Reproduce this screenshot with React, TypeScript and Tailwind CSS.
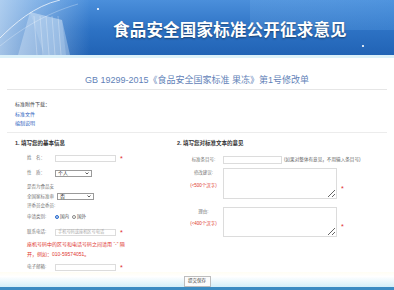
import React from "react"

const Star = () => <span className="ml-[4px] text-[7px] leading-none text-[#e02b2b]">*</span>

function Field({ label, children }: { label: string; children: React.ReactNode }) {
  return (
    <div className="flex h-[10px] items-center">
      <div className="w-[28px] shrink-0 text-[4.5px] text-[#777]">{label}</div>
      {children}
    </div>
  )
}

function FakeSelect({ value }: { value: string }) {
  return (
    <div className="flex h-[7px] w-[37px] items-center justify-between border border-[#9a9a9a] bg-white px-[2px] text-[5px] leading-none text-[#222]">
      <span>{value}</span>
      <svg width="4" height="3" viewBox="0 0 8 6">
        <path d="M1 1l3 3 3-3" fill="none" stroke="#333" strokeWidth="1.6" />
      </svg>
    </div>
  )
}

function Banner() {
  return (
    <div className="relative flex h-[55px] items-center overflow-hidden bg-[linear-gradient(180deg,#4b8fdb_0%,#2d72c4_55%,#2163b5_100%)] pl-[113px] pt-[5px]">
      <svg className="absolute inset-0" width="394" height="55" viewBox="0 0 394 55">
        <defs>
          <linearGradient id="glow" x1="0" y1="0" x2="1" y2="0">
            <stop offset="0" stopColor="#cfe3f7" stopOpacity="0.75" />
            <stop offset="1" stopColor="#cfe3f7" stopOpacity="0" />
          </linearGradient>
          <linearGradient id="ln" x1="0" y1="0" x2="1" y2="0">
            <stop offset="0" stopColor="#fff" stopOpacity="0.9" />
            <stop offset="1" stopColor="#fff" stopOpacity="0" />
          </linearGradient>
          <linearGradient id="ln2" x1="0" y1="0" x2="1" y2="0">
            <stop offset="0" stopColor="#fff" stopOpacity="0" />
            <stop offset="1" stopColor="#fff" stopOpacity="0.9" />
          </linearGradient>
          <linearGradient id="sky" x1="0" y1="0" x2="1" y2="0">
            <stop offset="0" stopColor="#8ec1ee" stopOpacity="0.25" />
            <stop offset="1" stopColor="#5aa0e6" stopOpacity="0.5" />
          </linearGradient>
        </defs>
        <rect x="250" y="0" width="144" height="30" fill="url(#sky)" opacity="0.6" />
        <rect x="0" y="0" width="90" height="55" fill="url(#glow)" />
        <path d="M18 55 L30 12 L62 20 L70 55 Z" fill="#e4f0fb" opacity="0.35" />
        <path d="M30 12 L62 20 L66 55 L44 55 Z" fill="#bcd7f2" opacity="0.35" />
        {[34, 40, 46, 52, 58].map((x) => (
          <line key={x} x1={x} y1="16" x2={x + 3} y2="55" stroke="#ffffff" strokeOpacity="0.35" strokeWidth="0.8" />
        ))}
        <path d="M0 38 C14 24 34 6 60 0" fill="none" stroke="#ffffff" strokeOpacity="0.7" strokeWidth="1" />
        <path d="M0 46 C20 30 44 14 78 4" fill="none" stroke="#ffffff" strokeOpacity="0.35" strokeWidth="0.8" />
        <line x1="98" y1="9" x2="240" y2="9" stroke="url(#ln)" strokeWidth="0.8" />
        <circle cx="98" cy="9" r="1.1" fill="#fff" />
        <line x1="200" y1="46" x2="363" y2="46" stroke="url(#ln2)" strokeWidth="0.8" />
        <circle cx="363" cy="46" r="1.1" fill="#fff" />
      </svg>
      <h1 className="relative text-[16.5px] font-bold leading-none tracking-[0.2px] text-white [text-shadow:0_1px_2px_rgba(0,0,0,0.45)]">
        食品安全国家标准公开征求意见
      </h1>
    </div>
  )
}

export default function App() {
  return (
    <div className="h-[290px] w-[394px] overflow-hidden bg-white font-[family-name:Liberation_Sans,Noto_Sans_CJK_SC,sans-serif] text-[#333]">
      <Banner />
      <div className="h-[3px] bg-[#dcf1f9]" />

      {/* title */}
      <div className="mx-[7px] border-b border-[#e6e6e6] pb-[3px] pt-[16px] text-center text-[9px] leading-[12px] text-[#6282b8]">
        GB 19299-2015《食品安全国家标准 果冻》第1号修改单
      </div>

      {/* attachments */}
      <div className="mx-[7px] border-b border-[#ececec] pb-[4px] pl-[8px] pt-[10px]">
        <div className="text-[5px] leading-[8px] text-[#444]">标准附件下载：</div>
        <div className="mt-[2px] text-[5px] leading-[9px] text-[#2f63c0]">标准文件</div>
        <div className="text-[5px] leading-[9px] text-[#2f63c0]">编制说明</div>
      </div>

      <div className="grid h-[139px] grid-cols-[177px_1fr] pt-[6px]">
        {/* left column */}
        <div className="pl-[15px]">
          <div className="text-[5.5px] font-bold leading-[8px] text-[#333]">1. 填写您的基本信息</div>
          <div className="ml-[12px]">
            <div className="mt-[6px]">
              <Field label="姓　名：">
                <div className="h-[7px] w-[61px] border border-[#dcdcdc]" />
                <Star />
              </Field>
            </div>
            <div className="mt-[5px]">
              <Field label="性　质：">
                <FakeSelect value="个人" />
              </Field>
            </div>
            <div className="mt-[4px] flex items-center">
              <div className="w-[30px] shrink-0 text-[4.5px] leading-[9.5px] text-[#777]">
                是否为食品安
                <br />
                全国家标准审
                <br />
                评委员会委员:
              </div>
              <FakeSelect value="否" />
            </div>
            <div className="mt-[1.5px]">
              <Field label="申请类别:">
                <div className="flex items-center gap-[1px] text-[4.5px] text-[#555]">
                  <span className="inline-block h-[4px] w-[4px] rounded-full border border-[#2f6fd0] bg-[#2f6fd0] shadow-[inset_0_0_0_0.6px_#fff]" />
                  <span className="mr-[2px]">国内</span>
                  <span className="inline-block h-[4px] w-[4px] rounded-full border border-[#888] bg-white" />
                  <span>国外</span>
                </div>
              </Field>
            </div>
            <div className="mt-[5px]">
              <Field label="联系电话:">
                <div className="flex h-[7px] w-[61px] items-center border border-[#dcdcdc] pl-[2px] text-[4.2px] text-[#aaa]">
                  手机号码或座机区号电话
                </div>
                <Star />
              </Field>
            </div>
            <div className="mt-[2px] text-[5px] leading-[10px] text-[#e0352d]">
              座机号码中的区号和电话号码之间请用 “-” 隔
              <br />
              开，例如：010-59574051。
            </div>
            <div className="mt-[3px]">
              <Field label="电子邮箱:">
                <div className="h-[7px] w-[61px] border border-[#dcdcdc]" />
                <Star />
              </Field>
            </div>
          </div>
        </div>

        {/* right column */}
        <div>
          <div className="text-[5.5px] font-bold leading-[8px] text-[#333]">2. 填写您对标准文本的意见</div>
          <div className="ml-[11px]">
            <div className="mt-[8px] flex h-[10px] items-center">
              <div className="w-[31px] shrink-0 text-center text-[4.5px] text-[#777]">标准条目号:</div>
              <div className="ml-[4px] h-[8px] w-[59px] border border-[#dcdcdc]" />
              <span className="ml-[2px] text-[4.6px] text-[#666]">(如果对整体有意见，不用输入条目号)</span>
            </div>
            <div className="mt-[3px] flex items-start">
              <div className="w-[31px] shrink-0 pt-[1px] text-center text-[4.5px] leading-[8px]">
                <div className="text-[#777]">修改建议:</div>
                <div className="mt-[5px] text-[#e0352d]">(&lt;500个汉字)</div>
              </div>
              <textarea className="ml-[4px] h-[31px] w-[114px] resize-y border border-[#dcdcdc] outline-none" />
              <span className="self-end pb-[1px]">
                <Star />
              </span>
            </div>
            <div className="mt-[8px] flex items-start">
              <div className="w-[31px] shrink-0 pt-[1px] text-center text-[4.5px] leading-[8px]">
                <div className="text-[#777]">理由:</div>
                <div className="mt-[4px] text-[#e0352d]">(&lt;400个汉字)</div>
              </div>
              <textarea className="ml-[4px] h-[30px] w-[114px] resize-y border border-[#dcdcdc] outline-none" />
              <span className="self-end pb-[1px]">
                <Star />
              </span>
            </div>
          </div>
        </div>
      </div>

      {/* footer */}
      <div className="flex h-[15px] items-end justify-center bg-[linear-gradient(180deg,#fffdf3_0%,#ffffff_30%,#d3eef8_100%)]">
        <button className="h-[11px] w-[27px] border border-[#bdbdbd] bg-[#fbfbfb] text-[4.5px] leading-none text-[#444]">
          提交保存
        </button>
      </div>
      <div className="h-[3px] bg-[#3b8bc2]" />
    </div>
  )
}
